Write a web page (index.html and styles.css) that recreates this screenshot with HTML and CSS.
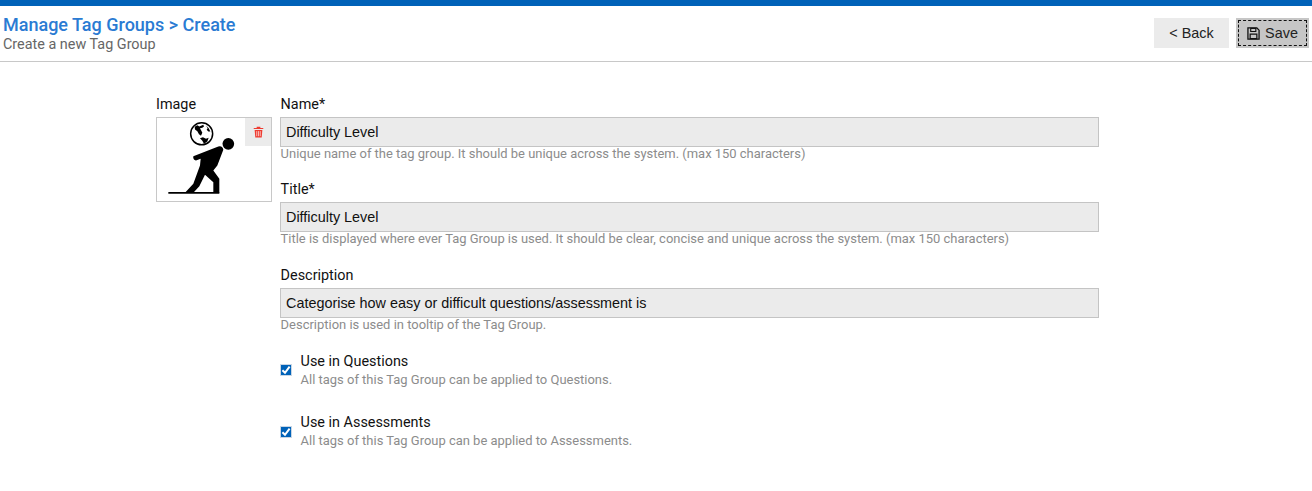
FILE: index.html
```html
<!DOCTYPE html>
<html lang="en">
<head>
<meta charset="utf-8">
<title>Create Tag Group</title>
<link rel="stylesheet" href="styles.css">
</head>
<body>
<header class="topbar">
  <div class="heading">
    <h1 class="title">Manage Tag Groups &gt; Create</h1>
    <p class="subtitle">Create a new Tag Group</p>
  </div>
  <div class="actions">
    <button class="btn" type="button">&lt; Back</button>
    <button class="btn btn-save" type="button">
      <svg class="save-icon" viewBox="0 0 14 14" width="13" height="13"><path d="M1 1h9.6L13 3.4V13H1z" fill="none" stroke="#111" stroke-width="1.4"/><path d="M4 1.5h5.5v3.4H4z" fill="none" stroke="#111" stroke-width="1.2"/><path d="M3.4 7.6h7.2v5H3.4z" fill="none" stroke="#111" stroke-width="1.3"/></svg>
      <span class="save-text">Save</span>
    </button>
  </div>
</header>
<main class="form">
  <section class="image-col">
    <div class="label">Image</div>
    <div class="image-box">
      <svg class="figure" viewBox="0 0 116 84" width="116" height="85">
        <g transform="translate(4 -2) scale(.3333)">
          <circle cx="125" cy="55" r="33" fill="#fff" stroke="#000" stroke-width="4.500"/>
          <path d="M104 34 112 29 118 33 130 28 132 33 127 37 120 38 124 46 127 52 123 61 117 56 112 47 105 42zM138 30 146 38 151 48 145 48 140 43 143 38zM120 68 129 65 138 70 146 67 142 78 132 85 127 76z" fill="#000"/>
          <circle cx="205" cy="85" r="17.500" fill="#000"/>
          <path d="M100 122 175 93Q188 90 190 103L172 150 160 165 178 190V232H160V200L135 178 118 212 100 232H75L100 205 120 150 122 130 108 135Q98 132 100 122z" fill="#000"/>
          <path d="M25 229.500H178V235H25z" fill="#000"/>
        </g>
      </svg>
      <button class="delete" type="button" aria-label="Delete image">
        <svg viewBox="0 0 12 13" width="11" height="12"><path d="M4 2V.8h4V2h3.200v1.300H.8V2zM1.800 4.200h8.400L9.500 12.600H2.500z" fill="#ee3b30"/><path d="M4.100 5.500v5.600M6 5.500v5.600M7.900 5.500v5.600" stroke="#fff" stroke-width=".7"/></svg>
      </button>
    </div>
  </section>
  <section class="fields-col">
    <div class="field">
      <label class="label">Name*</label>
      <div class="input">Difficulty Level</div>
      <p class="hint">Unique name of the tag group. It should be unique across the system. (max 150 characters)</p>
    </div>
    <div class="field">
      <label class="label">Title*</label>
      <div class="input">Difficulty Level</div>
      <p class="hint">Title is displayed where ever Tag Group is used. It should be clear, concise and unique across the system. (max 150 characters)</p>
    </div>
    <div class="field">
      <label class="label">Description</label>
      <div class="input">Categorise how easy or difficult questions/assessment is</div>
      <p class="hint">Description is used in tooltip of the Tag Group.</p>
    </div>
    <div class="check-row">
      <span class="checkbox"><svg viewBox="0 0 10 10" width="10" height="10"><path d="M1.400 5.200 4 7.800 8.600 1.600" fill="none" stroke="#fff" stroke-width="2"/></svg></span>
      <div>
        <div class="label">Use in Questions</div>
        <p class="hint">All tags of this Tag Group can be applied to Questions.</p>
      </div>
    </div>
    <div class="check-row">
      <span class="checkbox"><svg viewBox="0 0 10 10" width="10" height="10"><path d="M1.400 5.200 4 7.800 8.600 1.600" fill="none" stroke="#fff" stroke-width="2"/></svg></span>
      <div>
        <div class="label">Use in Assessments</div>
        <p class="hint">All tags of this Tag Group can be applied to Assessments.</p>
      </div>
    </div>
  </section>
</main>
</body>
</html>
```

FILE: styles.css
```css
* { box-sizing: border-box; }
html, body { margin: 0; padding: 0; }
body {
  font-family: Roboto, "Liberation Sans", sans-serif;
  color: #111;
  background: #fff;
  height: 491px;
  overflow: hidden;
}
.topbar {
  height: 62px;
  border-top: 6px solid #0062b8;
  border-bottom: 1px solid #c8c8c8;
  display: flex;
  justify-content: space-between;
  padding: 0 3px;
}
.title {
  margin: 8px 0 0;
  font-size: 18px;
  line-height: 22px;
  font-weight: 500;
  color: #2a7bd3;
}
.subtitle {
  margin: 0;
  font-size: 14.4px;
  line-height: 17px;
  color: #666;
}
.actions { display: flex; gap: 7px; padding-top: 12px; }
.btn {
  height: 30px;
  width: 75px;
  border: 0;
  background: #ebebeb;
  color: #222;
  font-family: "Liberation Sans", sans-serif;
  font-size: 14.4px;
  padding: 0;
  display: flex;
  align-items: center;
  justify-content: center;
}
.btn-save {
  width: 73px;
  background: #c6c6c6;
  outline: 1px dashed #111;
  outline-offset: -3px;
}
.save-icon { margin-right: 5px; }
.form {
  display: flex;
  padding: 32.8px 0 0 156px;
  gap: 8px;
}
.label { font-size: 14.4px; line-height: 20.6px; color: #111; }
.image-col { width: 116px; }
.image-box {
  position: relative;
  width: 116px;
  height: 85px;
  margin-top: 1.4px;
  border: 1px solid #c8c8c8;
  background: #fff;
}
.figure { display: block; margin: -1px; }
.delete {
  position: absolute;
  top: 0;
  right: 0;
  width: 26px;
  height: 28px;
  border: 0;
  padding: 0;
  background: #ebebeb;
  display: flex;
  align-items: center;
  justify-content: center;
}
.fields-col { width: 819px; }
.field { height: 85.6px; }
.field .label { display: block; margin-bottom: 1.4px; padding-left: .6px; }
.input {
  height: 30px;
  border: 1px solid #c4c4c4;
  background: #ebebeb;
  padding: 0 5px;
  font-family: "Liberation Sans", sans-serif;
  font-size: 14.4px;
  line-height: 29.7px;
  color: #111;
}
.hint {
  margin: 0;
  padding-left: .6px;
  font-size: 12.96px;
  line-height: 14.4px;
  color: #8c8c8c;
}
.check-row {
  display: flex;
  align-items: center;
  height: 36px;
  margin-bottom: 25.6px;
  gap: 8px;
}
.checkbox {
  width: 12px;
  height: 12px;
  background: #0062b8;
  border: 1px solid #c9d6e4;
  display: flex;
  align-items: center;
  justify-content: center;
  flex: none;
  margin-top: 1px;
}
.check-row .label { padding-left: .6px; margin-bottom: .4px; }
```
